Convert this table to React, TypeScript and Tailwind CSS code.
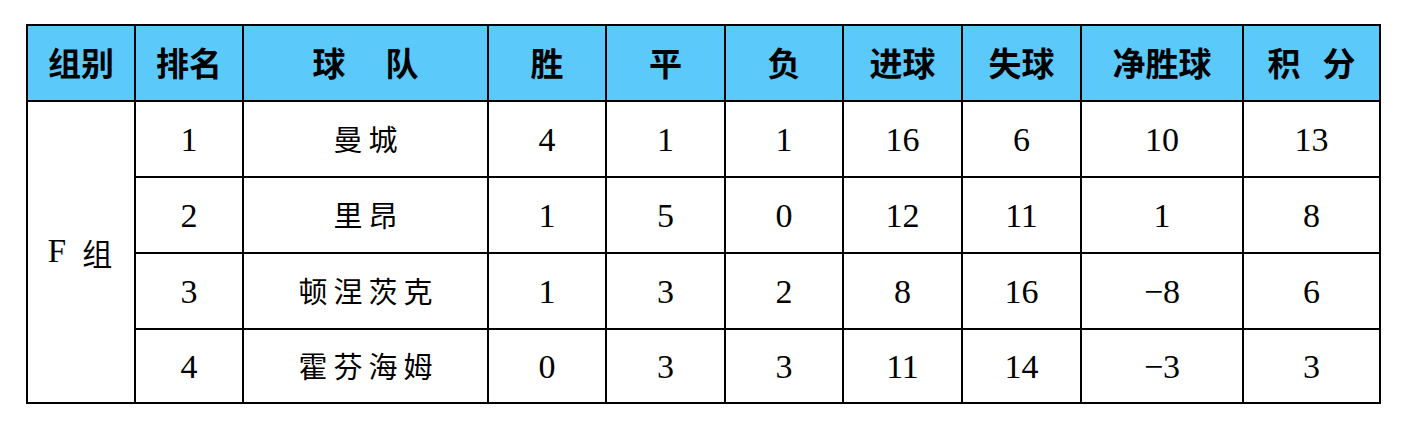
const headers: string[][] = [
  ['组别'],
  ['排名'],
  ['球', '队'],
  ['胜'],
  ['平'],
  ['负'],
  ['进球'],
  ['失球'],
  ['净胜球'],
  ['积', '分'],
];

const widths = [
  'w-[108px]',
  'w-[108px]',
  'w-[245px]',
  'w-[118px]',
  'w-[119px]',
  'w-[118px]',
  'w-[119px]',
  'w-[119px]',
  'w-[162px]',
  'w-[137px]',
];

const rows = [
  { rank: '1', team: '曼城', w: 4, d: 1, l: 1, gf: 16, ga: 6, gd: '10', pts: 13 },
  { rank: '2', team: '里昂', w: 1, d: 5, l: 0, gf: 12, ga: 11, gd: '1', pts: 8 },
  { rank: '3', team: '顿涅茨克', w: 1, d: 3, l: 2, gf: 8, ga: 16, gd: '−8', pts: 6 },
  { rank: '4', team: '霍芬海姆', w: 0, d: 3, l: 3, gf: 11, ga: 14, gd: '−3', pts: 3 },
];

const cell = 'border-2 border-black text-center align-middle p-0';
const num = `${cell} text-[34px] text-black [font-family:'Liberation_Serif',serif]`;

export default function App() {
  return (
    <div className="w-[1406px] h-[430px] bg-white pt-[24px] pl-[26px]">
      <table className="table-fixed border-collapse w-[1353px]">
        <colgroup>
          {widths.map((w, i) => (
            <col key={i} className={w} />
          ))}
        </colgroup>
        <thead>
          <tr className="h-[76px] bg-[#5bc9fa]">
            {headers.map((h, i) => (
              <th
                key={i}
                className={`${cell} text-[33px] font-bold text-black [font-family:'Noto_Sans_CJK_SC',sans-serif]`}
              >
                <div className={`flex justify-center ${h[0] === '球' ? 'gap-[40px]' : 'gap-[22px]'}`}>
                  {h.map((t) => (
                    <span key={t}>{t}</span>
                  ))}
                </div>
              </th>
            ))}
          </tr>
        </thead>
        <tbody>
          {rows.map((r, i) => (
            <tr key={r.rank} className={i === 3 ? 'h-[74px]' : 'h-[76px]'}>
              {i === 0 && (
                <td rowSpan={4} className={`${cell} text-black`}>
                  <div className="flex justify-center items-center gap-[16px] pr-[2px]">
                    <span className="text-[33px] [font-family:'Liberation_Serif',serif]">F</span>
                    <span className="text-[30px] [font-family:'Noto_Sans_CJK_SC',sans-serif]">组</span>
                  </div>
                </td>
              )}
              <td className={num}>{r.rank}</td>
              <td
                className={`${cell} text-[29px] tracking-[6px] text-black [font-family:'Noto_Sans_CJK_SC',sans-serif]`}
              >
                <span className="pl-[6px]">{r.team}</span>
              </td>
              <td className={num}>{r.w}</td>
              <td className={num}>{r.d}</td>
              <td className={num}>{r.l}</td>
              <td className={num}>{r.gf}</td>
              <td className={num}>{r.ga}</td>
              <td className={num}>{r.gd}</td>
              <td className={num}>{r.pts}</td>
            </tr>
          ))}
        </tbody>
      </table>
    </div>
  );
}
